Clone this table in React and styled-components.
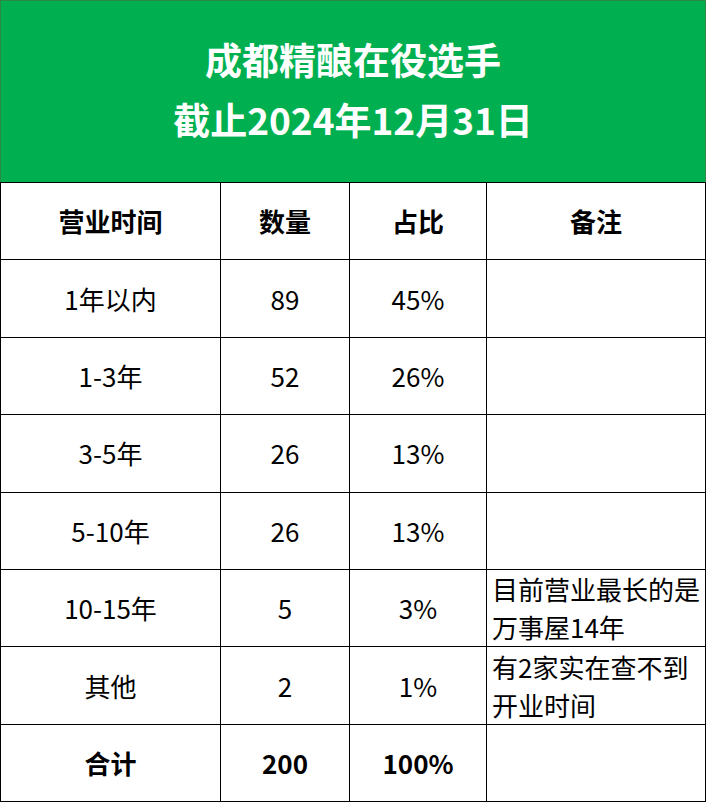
import styled, { createGlobalStyle } from "styled-components";

const GlobalStyle = createGlobalStyle`
  body {
    margin: 0;
    background: #fff;
    font-family: "Noto Sans CJK SC", "Noto Sans", sans-serif;
  }
`;

const rows = [
  { span: "1年以内", count: "89", share: "45%", note: "" },
  { span: "1-3年", count: "52", share: "26%", note: "" },
  { span: "3-5年", count: "26", share: "13%", note: "" },
  { span: "5-10年", count: "26", share: "13%", note: "" },
  { span: "10-15年", count: "5", share: "3%", note: "目前营业最长的是万事屋14年" },
  { span: "其他", count: "2", share: "1%", note: "有2家实在查不到开业时间" },
];

export default function App() {
  return (
    <>
      <GlobalStyle />
      <Sheet>
        <Title>
          <span>成都精酿在役选手</span>
          <span>截止2024年12月31日</span>
        </Title>
        <Grid>
          <Cell $bold>营业时间</Cell>
          <Cell $bold>数量</Cell>
          <Cell $bold>占比</Cell>
          <Cell $bold>备注</Cell>
          {rows.map((r) => (
            <Row key={r.span}>
              <Cell>{r.span}</Cell>
              <Cell>{r.count}</Cell>
              <Cell>{r.share}</Cell>
              <Cell $note>{r.note}</Cell>
            </Row>
          ))}
          <Cell $bold>合计</Cell>
          <Cell $bold>200</Cell>
          <Cell $bold>100%</Cell>
          <Cell />
        </Grid>
      </Sheet>
    </>
  );
}

const Sheet = styled.div`
  width: 706px;
  box-sizing: border-box;
`;

const Title = styled.div`
  height: 182px;
  box-sizing: border-box;
  background: #00b050;
  border: 1px solid #2a8a45;
  border-bottom: none;
  display: flex;
  flex-direction: column;
  align-items: center;
  justify-content: center;
  color: #fff;
  font-size: 37px;
  font-weight: 700;
  line-height: 60px;
  padding-bottom: 6px;
`;

const Grid = styled.div`
  display: grid;
  grid-template-columns: 220px 129px 137px 219px;
  grid-auto-rows: 77.4px;
  border-left: 1px solid #000;
  border-top: 1px solid #000;
`;

const Row = styled.div`
  display: contents;
`;

const Cell = styled.div`
  border-right: 1px solid #000;
  border-bottom: 1px solid #000;
  display: flex;
  align-items: center;
  justify-content: ${(p) => (p.$note ? "flex-start" : "center")};
  padding: ${(p) => (p.$note ? "0 2px 0 5px" : "0")};
  font-size: 26px;
  font-weight: ${(p) => (p.$bold ? 700 : 400)};
  line-height: 38px;
  color: #000;
  text-align: left;
  word-break: break-all;
`;
